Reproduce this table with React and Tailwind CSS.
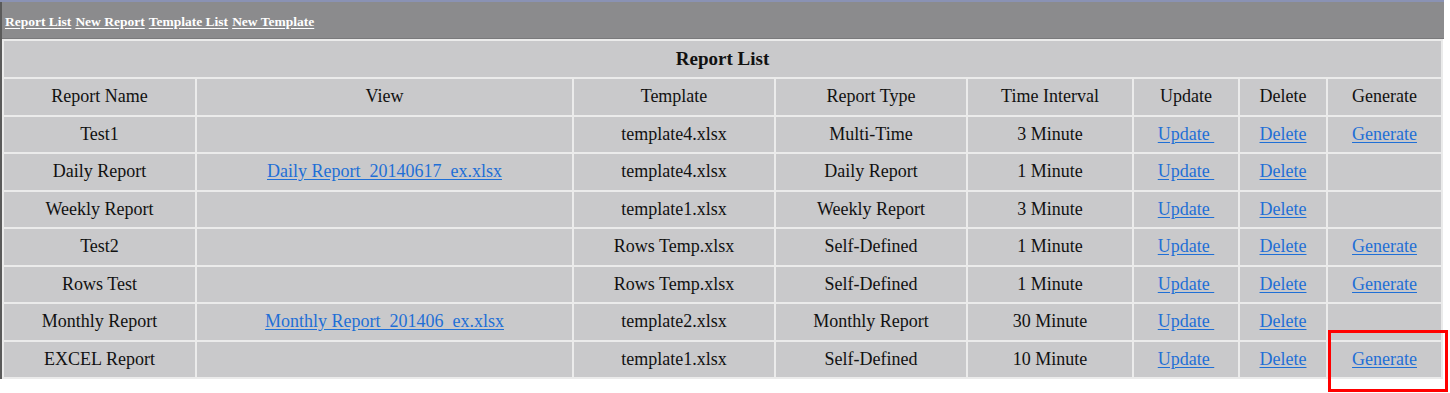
import React from "react";

const reports = [
  { name: "Test1", view: "", template: "template4.xlsx", type: "Multi-Time", interval: "3 Minute", generate: true },
  { name: "Daily Report", view: "Daily Report  20140617  ex.xlsx", template: "template4.xlsx", type: "Daily Report", interval: "1 Minute", generate: false },
  { name: "Weekly Report", view: "", template: "template1.xlsx", type: "Weekly Report", interval: "3 Minute", generate: false },
  { name: "Test2", view: "", template: "Rows Temp.xlsx", type: "Self-Defined", interval: "1 Minute", generate: true },
  { name: "Rows Test", view: "", template: "Rows Temp.xlsx", type: "Self-Defined", interval: "1 Minute", generate: true },
  { name: "Monthly Report", view: "Monthly Report  201406  ex.xlsx", template: "template2.xlsx", type: "Monthly Report", interval: "30 Minute", generate: false },
  { name: "EXCEL Report", view: "", template: "template1.xlsx", type: "Self-Defined", interval: "10 Minute", generate: true },
];

const headers = ["Report Name", "View", "Template", "Report Type", "Time Interval", "Update", "Delete", "Generate"];

const cell = "bg-[#c9c9cb] text-center align-middle h-[35.5px] p-0 text-[18px] text-[#111]";
const link = "text-[#1f6fd6] underline underline-offset-2 whitespace-pre";

export default function App() {
  return (
    <div className="relative w-[1450px] h-[393px] bg-white font-['Liberation_Serif',serif] overflow-hidden">
      <div className="h-[2px] w-[1444px] bg-[#8a92b4]" />
      <div className="w-[1444px] border-l-[2px] border-[#5a5a5a]">
        <div className="h-[37px] bg-[#8b8b8d] border-b border-[#7a7a7c] flex items-end pb-[6px] pl-[3px] gap-[4px] text-[13.5px] font-bold text-white">
          <a className="underline underline-offset-2">Report List</a>
          <a className="underline underline-offset-2">New Report</a>
          <a className="underline underline-offset-2">Template List</a>
          <a className="underline underline-offset-2">New Template</a>
        </div>
        <table className="border-separate border-spacing-[2px] bg-[#ebebeb] w-[1441px] table-fixed">
          <colgroup>
            <col className="w-[191px]" />
            <col className="w-[375px]" />
            <col className="w-[200px]" />
            <col className="w-[190px]" />
            <col className="w-[164px]" />
            <col className="w-[104px]" />
            <col className="w-[86px]" />
            <col className="w-[113px]" />
          </colgroup>
          <tbody>
            <tr>
              <td colSpan={8} className="bg-[#c9c9cb] text-center h-[36px] p-0 text-[19px] font-bold text-[#111]">
                Report List
              </td>
            </tr>
            <tr>
              {headers.map((h) => (
                <td key={h} className={cell}>
                  {h}
                </td>
              ))}
            </tr>
            {reports.map((r) => (
              <tr key={r.name}>
                <td className={cell}>{r.name}</td>
                <td className={cell}>{r.view && <a className={link}>{r.view}</a>}</td>
                <td className={cell}>{r.template}</td>
                <td className={cell}>{r.type}</td>
                <td className={cell}>{r.interval}</td>
                <td className={cell}>
                  <a className={link}>Update </a>
                </td>
                <td className={cell}>
                  <a className={link}>Delete</a>
                </td>
                <td className={cell}>{r.generate && <a className={link}>Generate</a>}</td>
              </tr>
            ))}
          </tbody>
        </table>
      </div>
      {/* highlight around the last Generate link */}
      <div className="absolute left-[1328px] top-[330px] w-[120px] h-[62px] border-[3px] border-[#ff0000]" />
    </div>
  );
}
